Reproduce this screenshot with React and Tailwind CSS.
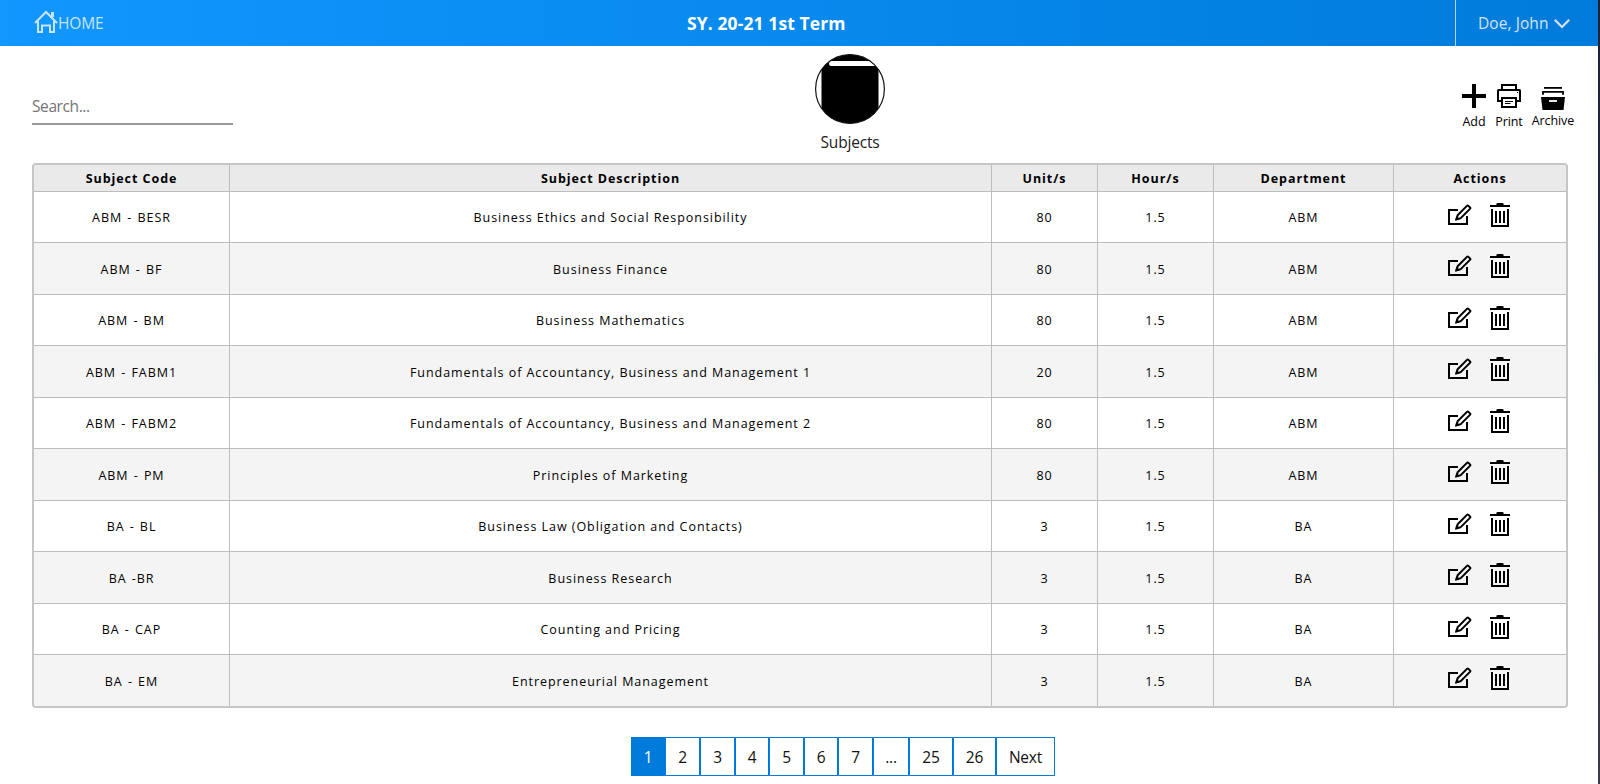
const ROWS = [
  ['ABM - BESR', 'Business Ethics and Social Responsibility', '80', '1.5', 'ABM'],
  ['ABM - BF', 'Business Finance', '80', '1.5', 'ABM'],
  ['ABM - BM', 'Business Mathematics', '80', '1.5', 'ABM'],
  ['ABM - FABM1', 'Fundamentals of Accountancy, Business and Management 1', '20', '1.5', 'ABM'],
  ['ABM - FABM2', 'Fundamentals of Accountancy, Business and Management 2', '80', '1.5', 'ABM'],
  ['ABM - PM', 'Principles of Marketing', '80', '1.5', 'ABM'],
  ['BA - BL', 'Business Law (Obligation and Contacts)', '3', '1.5', 'BA'],
  ['BA -BR', 'Business Research', '3', '1.5', 'BA'],
  ['BA - CAP', 'Counting and Pricing', '3', '1.5', 'BA'],
  ['BA - EM', 'Entrepreneurial Management', '3', '1.5', 'BA'],
];

const HEADERS = ['Subject Code', 'Subject Description', 'Unit/s', 'Hour/s', 'Department', 'Actions'];

const PAGES = [
  ['1', 'w-[34px]'],
  ['2', 'w-[35px]'],
  ['3', 'w-[35px]'],
  ['4', 'w-[34px]'],
  ['5', 'w-[35px]'],
  ['6', 'w-[34px]'],
  ['7', 'w-[35px]'],
  ['...', 'w-[36px]'],
  ['25', 'w-[44px]'],
  ['26', 'w-[43px]'],
  ['Next', 'w-[59px]'],
];

const GRID = 'grid grid-cols-[196px_762px_106px_116px_180px_172px]';

function HomeIcon() {
  return (
    <svg width="24" height="24" viewBox="0 0 24 24" fill="none" stroke="currentColor" strokeWidth="2">
      <path d="M1 13 12 2l11 11" />
      <path d="M4 11v11h4v-6.500h8V22H20V11" />
      <path d="M18.500 2v5" strokeWidth="3" />
    </svg>
  );
}

function PlusIcon() {
  return (
    <svg width="24" height="24" viewBox="0 0 24 24" fill="none" stroke="currentColor" strokeWidth="4">
      <path d="M12 0v24M0 12h24" />
    </svg>
  );
}

function PrintIcon() {
  return (
    <svg width="24" height="24" viewBox="0 0 24 24" fill="none" stroke="currentColor" strokeWidth="2">
      <path d="M5 6V1h14v5" />
      <path d="M5 17H1V6.500Q1 6 1.500 6H22.500Q23 6 23 6.500V17h-4" />
      <path d="M5 14h14v9H5z" />
      <path d="M8 17.500h8M8 19.500h5.500" strokeWidth="1" />
      <path d="M20 8.500h1" strokeWidth="1" />
    </svg>
  );
}

function ArchiveIcon() {
  return (
    <svg width="24" height="24" viewBox="0 0 24 24" fill="none" stroke="currentColor" strokeWidth="1.800">
      <path d="M3 1.900h18" />
      <path d="M2 8.800V5.900h20v2.900" />
      <path d="M0 11h24l-1.500 13h-21z" fill="currentColor" stroke="none" />
      <path d="M8 15h8" stroke="white" />
    </svg>
  );
}

function EditIcon() {
  return (
    <svg width="24" height="24" viewBox="0 0 24 24" fill="none" stroke="currentColor" strokeWidth="2">
      <path d="M10 7H1v14h18v-8" />
      <path d="M8.700 16.300 9.600 12.200 19.200 2.600a.7.700 0 0 1 1 0l2 2a.7.700 0 0 1 0 1L12.700 15.200z" strokeWidth="2" />
      <path d="M7 17.500l1.200-4.500 3.300 3.300z" fill="currentColor" stroke="none" />
    </svg>
  );
}

function TrashIcon() {
  return (
    <svg width="24" height="24" viewBox="0 0 24 24" fill="none" stroke="currentColor" strokeWidth="2">
      <path d="M2 3h20" />
      <path d="M8.500 2 10 0h4l1.500 2z" fill="currentColor" stroke="none" />
      <path d="M8.500 1.200h7" />
      <path d="M4 6v17h16V6" />
      <path d="M8 8v12M12 8v12M16 8v12" />
    </svg>
  );
}

function SubjectsLogo() {
  return (
    <svg width="70" height="70" viewBox="0 0 70 70">
      <defs>
        <clipPath id="disc">
          <circle cx="35" cy="35" r="34.500" />
        </clipPath>
      </defs>
      <g clipPath="url(#disc)">
        <path d="M6.500 70V15Q6.500 0 20 0H63.500V7H16.500Q14 7 14 9.500T16.500 12H63.500V70z" />
      </g>
      <circle cx="35" cy="35" r="34.400" fill="none" stroke="#111" strokeWidth="1.200" />
    </svg>
  );
}

function Tool({ icon, label, className }) {
  return (
    <div className={`flex flex-col items-center text-[12.500px] leading-4 tracking-[-0.100px] ${className}`}>
      {icon}
      {label}
    </div>
  );
}

export default function App() {
  return (
    <div className="flex h-[784px] w-[1600px] overflow-hidden bg-white font-['Open_Sans','Noto_Sans',sans-serif] text-black">
      <div className="w-[1598px]">
        <header className="flex h-[46px] items-center bg-linear-to-r from-[#1197ff] to-[#007bdb] text-[#d6e3ee]">
          <div className="flex w-[300px] items-center pl-[34px] text-[15.500px] tracking-[-0.150px] text-[#c9e3fa]">
            <div className="-mt-[3px]"><HomeIcon /></div>
            <span className="pt-px">HOME</span>
          </div>
          <h1 className="flex-1 pl-[387px] pt-px text-[17.500px] font-bold tracking-[0.100px] text-white">SY. 20-21 1st Term</h1>
          <div className="flex h-full w-[143px] items-center border-l border-[#b9d2e6] pl-[22px] pt-px text-[15.500px]">
            <span className="w-[76px] whitespace-nowrap pt-px tracking-[0.080px]">Doe, John</span>
            <svg width="16" height="10" viewBox="0 0 16 10" fill="none" stroke="currentColor" strokeWidth="2.200">
              <path d="M.8.800 8 8 15.200.800" />
            </svg>
          </div>
        </header>

        <section className="flex h-[117px]">
          <div className="w-[815px] pl-8 pt-[47px]">
            <div className="h-[32px] w-[201px] border-b-2 border-[#999] text-[15.500px] leading-[27px] tracking-[-0.400px] text-[#757575]">
              Search...
            </div>
          </div>
          <div className="flex w-[70px] flex-col items-center pt-2">
            <SubjectsLogo />
            <span className="mt-[6px] text-[15.500px] leading-6 tracking-[-0.180px] text-[#212121]">Subjects</span>
          </div>
          <div className="flex flex-1 pl-[572px] pt-[38px]">
            <Tool className="w-[34px] gap-[6px]" icon={<PlusIcon />} label="Add" />
            <Tool className="w-[36px] gap-[6px]" icon={<PrintIcon />} label="Print" />
            <Tool className="w-[52px] gap-[3px] pt-[2px]" icon={<ArchiveIcon />} label="Archive" />
          </div>
        </section>

        <div className="ml-8 w-[1536px] overflow-hidden rounded-[4px] border-2 border-[#c6c6c6] text-center text-[12.500px] tracking-[0.950px]">
          <div className={`${GRID} h-[27px] border-b border-[#bdbdbd] bg-[#eaeaea] font-bold leading-[28px]`}>
            {HEADERS.map((header) => (
              <div key={header} className="border-r border-[#bdbdbd] last:border-r-0">{header}</div>
            ))}
          </div>
          {ROWS.map((row, index) => (
            <div
              key={row[0]}
              className={`${GRID} border-[#bdbdbd] ${index % 2 ? 'bg-[#f4f4f4]' : 'bg-white'} ${
                index === ROWS.length - 1 ? 'h-[51px]' : index % 2 ? 'h-[52px] border-b' : 'h-[51px] border-b'
              }`}
            >
              {row.map((cell, i) => (
                <div
                  key={i}
                  className="flex items-center justify-center border-r border-[#bdbdbd] pt-[3px] first:[word-spacing:1px]"
                >
                  {cell}
                </div>
              ))}
              <div className="flex gap-4 pl-[54px] pt-[11px]">
                <EditIcon />
                <TrashIcon />
              </div>
            </div>
          ))}
        </div>

        <nav className="ml-[631px] mt-[29px] flex h-[39px] text-center text-[15.500px] leading-[39px] tracking-[-0.200px] text-[#111]">
          {PAGES.map(([label, width], i) => (
            <div
              key={label}
              className={`${width} border border-[#007bdb] ${i === 0 ? 'bg-[#007bdb] text-white' : 'bg-white'}`}
            >
              {label}
            </div>
          ))}
        </nav>
      </div>
      <div className="w-[2px] bg-linear-to-b from-[#1d2138] via-[#2b2d42] to-[#3b3a4c]" />
    </div>
  );
}
